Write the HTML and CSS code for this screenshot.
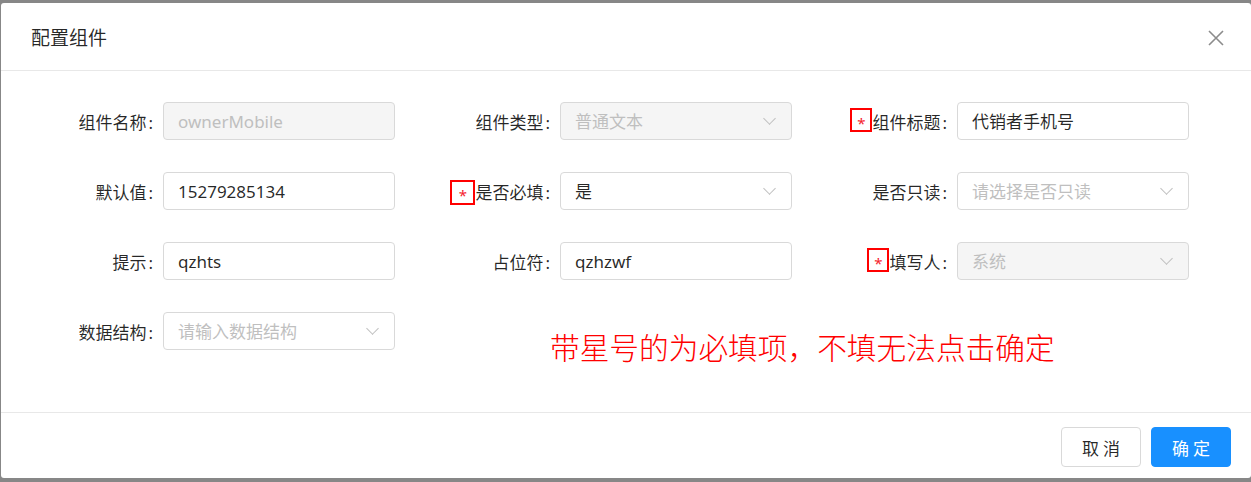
FILE: index.html
```html
<!DOCTYPE html>
<html lang="zh-CN">
<head>
    <meta charset="UTF-8">
    <title>配置组件</title>
    <link rel="stylesheet" href="styles.css">
</head>
<body>
    <div class="modal">
        <div class="modal-header">
            <span class="modal-title">配置组件</span>
            <svg class="close-icon" width="16" height="16" viewBox="0 0 16 16">
                <path d="M1 1L15 15M15 1L1 15" stroke="#8c8c8c" stroke-width="1.6" fill="none"/>
            </svg>
        </div>

        <div class="modal-body">
            <div class="form-grid">
                <div class="form-item">
                    <label class="form-label">组件名称<span class="colon">:</span></label>
                    <div class="field disabled">ownerMobile</div>
                </div>
                <div class="form-item">
                    <label class="form-label">组件类型<span class="colon">:</span></label>
                    <div class="field select disabled">普通文本<span class="arrow"></span></div>
                </div>
                <div class="form-item">
                    <label class="form-label"><span class="required">*</span>组件标题<span class="colon">:</span></label>
                    <div class="field">代销者手机号</div>
                </div>

                <div class="form-item">
                    <label class="form-label">默认值<span class="colon">:</span></label>
                    <div class="field">15279285134</div>
                </div>
                <div class="form-item">
                    <label class="form-label"><span class="required wide">*</span>是否必填<span class="colon">:</span></label>
                    <div class="field select">是<span class="arrow"></span></div>
                </div>
                <div class="form-item">
                    <label class="form-label">是否只读<span class="colon">:</span></label>
                    <div class="field select placeholder">请选择是否只读<span class="arrow"></span></div>
                </div>

                <div class="form-item">
                    <label class="form-label">提示<span class="colon">:</span></label>
                    <div class="field">qzhts</div>
                </div>
                <div class="form-item">
                    <label class="form-label">占位符<span class="colon">:</span></label>
                    <div class="field">qzhzwf</div>
                </div>
                <div class="form-item">
                    <label class="form-label"><span class="required">*</span>填写人<span class="colon">:</span></label>
                    <div class="field select disabled">系统<span class="arrow"></span></div>
                </div>

                <div class="form-item">
                    <label class="form-label">数据结构<span class="colon">:</span></label>
                    <div class="field select placeholder">请输入数据结构<span class="arrow"></span></div>
                </div>
                <div class="note">带星号的为必填项，不填无法点击确定</div>
            </div>
        </div>

        <div class="modal-footer">
            <button class="btn">取 消</button>
            <button class="btn btn-primary">确 定</button>
        </div>
    </div>
</body>
</html>
```

FILE: styles.css
```css
body {
    margin: 0;
    background-color: #878787;
    font-family: "Noto Sans", "Noto Sans CJK SC", sans-serif;
    color: rgba(0, 0, 0, 0.85);
}
.modal {
    background-color: #fff;
    margin: 3px 0 0 1px;
    height: 475px;
    border-radius: 3px;
    display: flex;
    flex-direction: column;
}
.modal-header {
    height: 68px;
    padding: 2px 27px 0 30px;
    border-bottom: 1px solid #e8e8e8;
    display: flex;
    align-items: center;
    justify-content: space-between;
    box-sizing: border-box;
}
.modal-title {
    font-size: 19px;
    line-height: 24px;
    color: rgba(0, 0, 0, 0.85);
}
.close-icon {
    display: block;
}
.modal-body {
    flex: 1;
    padding: 31px 0 0 30px;
}
.form-grid {
    display: grid;
    grid-template-columns: repeat(3, 397px);
    row-gap: 32px;
}
.form-item {
    display: flex;
    align-items: center;
    height: 38px;
}
.form-label {
    width: 132px;
    padding: 3px 10px 0 0;
    box-sizing: border-box;
    text-align: right;
    font-size: 17px;
    line-height: 24px;
    white-space: nowrap;
    display: flex;
    justify-content: flex-end;
    align-items: center;
}
.colon {
    margin-left: 2px;
}
.required {
    display: inline-block;
    width: 18px;
    height: 20px;
    border: 2px solid #f00;
    color: #f5222d;
    font-size: 15px;
    line-height: 26px;
    text-align: center;
    margin-top: -6px;
}
.required.wide {
    width: 21px;
    height: 21px;
    margin-top: 0;
}
.field {
    position: relative;
    width: 232px;
    height: 38px;
    box-sizing: border-box;
    border: 1px solid #d9d9d9;
    border-radius: 4px;
    padding: 2px 14px 0;
    font-size: 17px;
    line-height: 34px;
    color: rgba(0, 0, 0, 0.85);
    white-space: nowrap;
}
.field.disabled {
    background-color: #f5f5f5;
    color: #bfbfbf;
}
.field.placeholder {
    color: #bfbfbf;
}
.arrow {
    position: absolute;
    right: 17px;
    top: 11px;
    width: 8px;
    height: 8px;
    border-right: 1.3px solid #bfbfbf;
    border-bottom: 1.3px solid #bfbfbf;
    transform: rotate(45deg);
}
.note {
    grid-column: 2 / 4;
    padding-left: 122px;
    margin-top: 20px;
    font-size: 29.7px;
    line-height: 30px;
    color: #f00;
    font-family: "Noto Sans CJK SC", serif;
    font-weight: 300;
}
.modal-footer {
    border-top: 1px solid #e8e8e8;
    height: 66px;
    box-sizing: border-box;
    padding: 14px 20px 0 0;
    display: flex;
    justify-content: flex-end;
    gap: 10px;
}
.btn {
    width: 80px;
    height: 40px;
    border: 1px solid #d9d9d9;
    border-radius: 4px;
    background-color: #fff;
    color: rgba(0, 0, 0, 0.85);
    font-family: "Noto Sans CJK SC", sans-serif;
    font-size: 17px;
    cursor: pointer;
}
.btn-primary {
    background-color: #1890ff;
    border-color: #1890ff;
    color: #fff;
}
```
